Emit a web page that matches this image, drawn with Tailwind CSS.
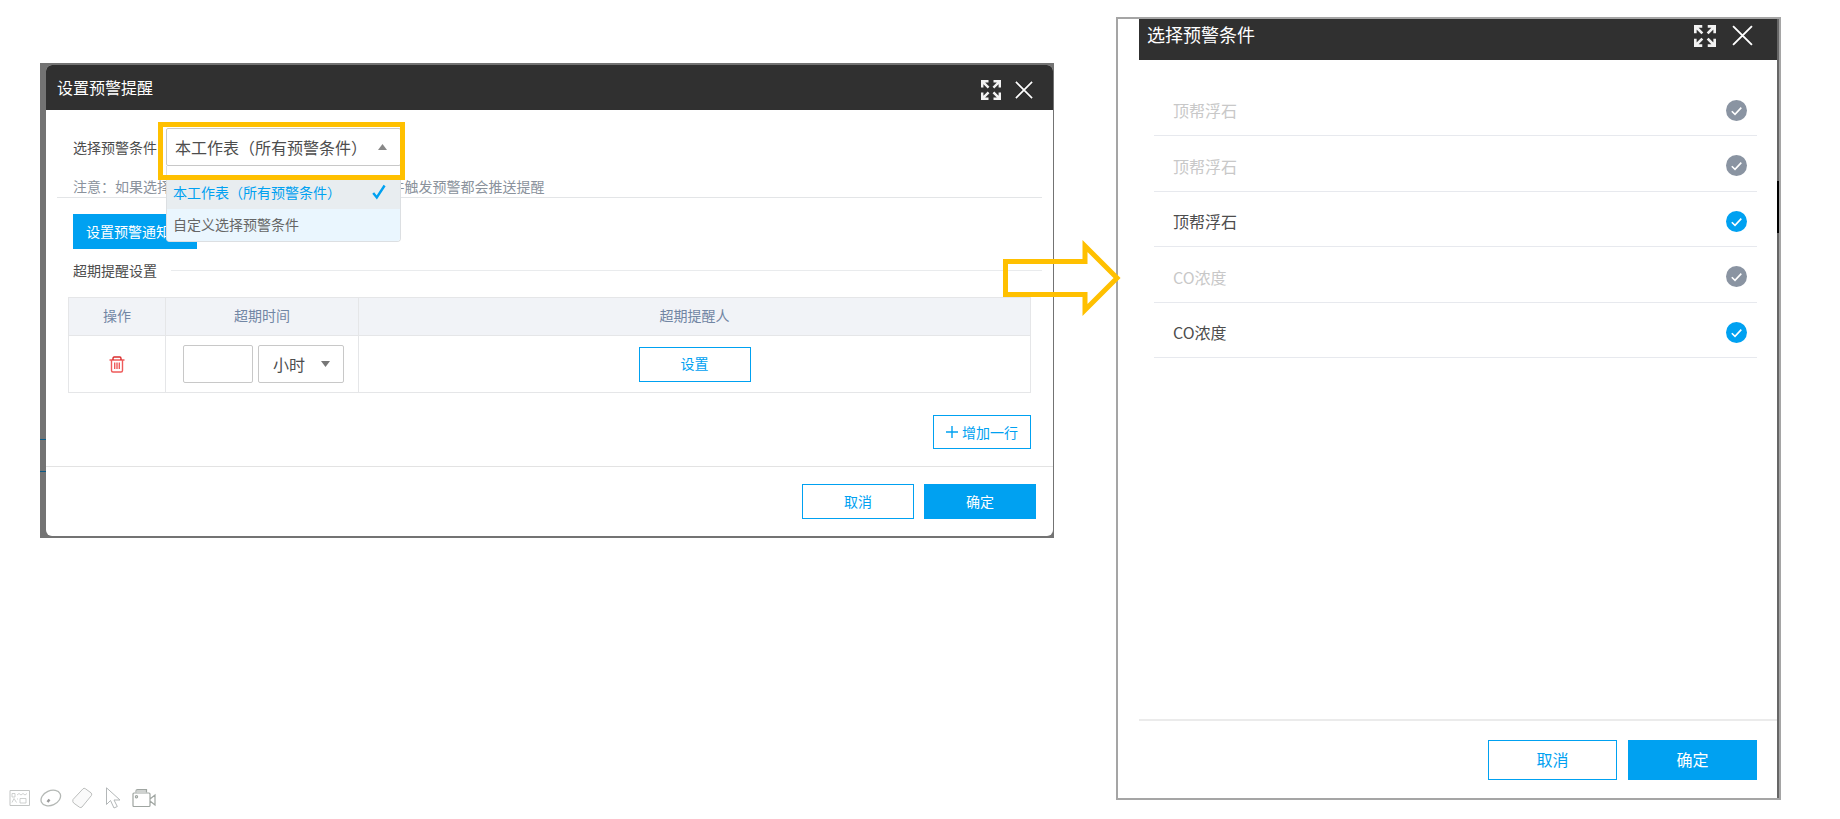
<!DOCTYPE html>
<html lang="zh-CN">
<head>
    <meta charset="UTF-8">
    <meta name="viewport" content="width=device-width, initial-scale=1.0">
    <title>设置预警提醒</title>
    <script src="https://cdn.jsdelivr.net/npm/@tailwindcss/browser@4"></script>
</head>
<body class="bg-white font-['Noto_Sans_CJK_SC',sans-serif] text-sm leading-5 text-[#4d4d4d]">

    <!-- Shared icons -->
    <svg class="hidden">
        <symbol id="expand" viewBox="0 0 20 20">
            <g fill="none" stroke="#f2f2f2" stroke-width="2.4">
                <path d="M1.2 7.5V1.2H7.5M1.8 1.8L7.6 7.6" />
                <path d="M12.5 1.2H18.8V7.5M18.2 1.8L12.4 7.6" />
                <path d="M1.2 12.5V18.8H7.5M1.8 18.2L7.6 12.4" />
                <path d="M12.5 18.8H18.8V12.5M18.2 18.2L12.4 12.4" />
            </g>
        </symbol>
        <symbol id="close" viewBox="0 0 20 20">
            <path d="M1 1L19 19M19 1L1 19" fill="none" stroke="#fff" stroke-width="1.8" />
        </symbol>
        <symbol id="tick" viewBox="0 0 21 21">
            <path d="M5.8 11.2L9 14.3L15.3 7.6" fill="none" stroke="#fff" stroke-width="1.6" />
        </symbol>
    </svg>

    <main class="grid min-h-screen grid-cols-[1054fr_665fr] gap-[62px] pr-[59px]">

        <!-- Left: reminder settings -->
        <div class="relative flex flex-col justify-between pt-[63px] pb-2.5">
            <div class="ml-10 bg-[#737373] pt-[2px] pr-px pb-[2px]">
                <div class="flex">
                    <div class="flex w-[6px] shrink-0 flex-col justify-end pb-16">
                        <span class="h-[33px] border-y border-[#0a5a85]"></span>
                    </div>
                    <section class="min-w-0 flex-1 overflow-hidden rounded-md bg-white">
                        <header class="flex h-[45px] items-center justify-between bg-[#303030] pr-5 pl-[11px]">
                            <h1 class="pb-[2px] text-base text-white">设置预警提醒</h1>
                            <div class="flex items-center gap-3.5 pt-1">
                                <button aria-label="全屏"><svg class="size-5"><use href="#expand" /></svg></button>
                                <button aria-label="关闭"><svg class="size-[18px]"><use href="#close" /></svg></button>
                            </div>
                        </header>

                        <div class="mx-[11px] border-b border-[#e3e5e7] pt-[18px] pl-4">
                            <div class="flex items-center gap-[9px]">
                                <label for="condition">选择预警条件</label>
                                <div class="relative z-10 w-[235px]">
                                    <select id="condition" class="block h-[38px] w-full appearance-none rounded-xs border border-[#c8c8c8] bg-white pl-2 text-base text-[#4d4d4d]">
                                        <option>本工作表（所有预警条件）</option>
                                        <option>自定义选择预警条件</option>
                                    </select>
                                    <svg class="pointer-events-none absolute top-4 right-3.5 h-[6px] w-[9px]" viewBox="0 0 9 6"><path d="M0 6L4.5 0L9 6Z" fill="#888" /></svg>
                                    <ul class="absolute top-full w-full overflow-hidden rounded-b border border-t-0 border-[#dcdfe2] bg-white pt-[11px]">
                                        <li class="flex h-8 items-center justify-between bg-[#e8edf0] pr-3.5 pb-[2px] pl-1.5 text-[#00a1f1]">
                                            本工作表（所有预警条件）
                                            <svg class="h-4 w-3.5" viewBox="0 0 14 16"><path d="M1.2 9L4.8 13.5L12.6 1.5" fill="none" stroke="#00a1f1" stroke-width="2.4" /></svg>
                                        </li>
                                        <li class="flex h-8 items-center bg-[#eaf6fe] pb-[2px] pl-1.5 text-[#666]">自定义选择预警条件</li>
                                    </ul>
                                    <div class="pointer-events-none absolute -top-1.5 -right-1 -bottom-3.5 -left-2 border-5 border-[#ffc000]"></div>
                                </div>
                            </div>
                            <p class="mt-2.5 pb-px text-[#8a929c]">注意：如果选择本工作表(所有预警条件)，则任一条件触发预警都会推送提醒</p>
                        </div>

                        <div class="mx-[11px] pt-4 pl-4">
                            <button class="h-[35px] bg-[#00a1f1] px-[13px] pb-[2px] text-white">设置预警通知人</button>
                            <div class="mt-[11px] flex items-center gap-3.5">
                                <h2>超期提醒设置</h2>
                                <span class="h-px flex-1 bg-[#e9ebed]"></span>
                            </div>
                        </div>

                        <div class="mx-[22px] mt-[17px]">
                            <table class="w-full table-fixed border-collapse">
                                <thead>
                                    <tr class="h-[38px] bg-[#f1f3f7] text-[#7186a4]">
                                        <th class="w-[97px] border border-[#e5e6e8] pb-[3px] font-normal">操作</th>
                                        <th class="w-[193px] border border-[#e5e6e8] pb-[3px] font-normal">超期时间</th>
                                        <th class="border border-[#e5e6e8] pb-[3px] font-normal">超期提醒人</th>
                                    </tr>
                                </thead>
                                <tbody>
                                    <tr class="h-[57px]">
                                        <td class="border border-[#e5e6e8] text-center">
                                            <button aria-label="删除" class="mx-auto block">
                                                <svg class="h-[17px] w-4" viewBox="0 0 16 17" fill="none" stroke="#ee5a5a" stroke-width="1.4">
                                                    <path d="M.5 4H15.5M2.5 4V14.5Q2.5 16 4 16H12Q13.5 16 13.5 14.5V4M5.7 6.5V13M8 6.5V13M10.3 6.5V13" />
                                                    <path d="M4 4V2.5Q4 1 5.2 1H10.8Q12 1 12 2.5V4" stroke="#d92c2c" />
                                                </svg>
                                            </button>
                                        </td>
                                        <td class="border border-[#e5e6e8]">
                                            <div class="flex justify-center gap-[5px] pl-[3px]">
                                                <input type="text" aria-label="超期时间" class="h-[38px] w-[70px] rounded-xs border border-[#c8c8c8] px-2">
                                                <div class="relative">
                                                    <select aria-label="时间单位" class="block h-[38px] w-[86px] appearance-none rounded-xs border border-[#c8c8c8] pl-3.5 text-base text-[#4d4d4d]">
                                                        <option>小时</option>
                                                        <option>天</option>
                                                    </select>
                                                    <svg class="pointer-events-none absolute top-4 right-3.5 h-[6px] w-[9px]" viewBox="0 0 9 6"><path d="M0 0L4.5 6L9 0Z" fill="#777" /></svg>
                                                </div>
                                            </div>
                                        </td>
                                        <td class="border border-[#e5e6e8] text-center">
                                            <button class="h-[35px] w-28 border border-[#00a1f1] pb-[2px] text-[#00a1f1]">设置</button>
                                        </td>
                                    </tr>
                                </tbody>
                            </table>
                            <div class="mt-[22px] flex justify-end">
                                <button class="flex h-[34px] items-center gap-1 border border-[#00a1f1] px-3 text-[#00a1f1]">
                                    <svg class="size-3" viewBox="0 0 12 12"><path d="M0 6H12M6 0V12" stroke="#00a1f1" stroke-width="1.4" /></svg>
                                    增加一行
                                </button>
                            </div>
                        </div>

                        <footer class="mt-[17px] flex justify-end gap-2.5 border-t border-[#e3e3e3] py-[17px] pr-[17px]">
                            <button class="h-[35px] w-28 border border-[#00a1f1] pb-[2px] text-[#00a1f1]">取消</button>
                            <button class="h-[35px] w-28 bg-[#00a1f1] pb-[2px] text-white">确定</button>
                        </footer>
                    </section>
                </div>
            </div>

            <!-- Slideshow tools -->
            <nav class="flex items-center gap-2.5 pl-[9px]">
                <button aria-label="字幕">
                    <svg class="h-5 w-[21px]" viewBox="0 0 21 20" fill="none" stroke="#c3c5c4">
                        <path d="M1 2.5H20.5V17.5H1Z" />
                        <path d="M3 5.5H6V9H3ZM8 7L10 5.5L12 7L14 5.5L16 7L18 5.5M3 14.5L5 10.5L7.5 14.5M8 11H9M11 10.5H17V15H11Z" stroke-width=".8" />
                    </svg>
                </button>
                <button aria-label="画笔">
                    <svg class="h-5 w-[22px]" viewBox="0 0 22 20" fill="none" stroke="#b4b8b5" stroke-width="1.3">
                        <ellipse cx="10.8" cy="10" rx="10.2" ry="7.2" transform="rotate(-24 10.8 10)" />
                        <path d="M7.5 14L9.5 11.5" stroke="#999" stroke-width="2.4" />
                    </svg>
                </button>
                <button aria-label="橡皮擦">
                    <svg class="h-[22px] w-[21px]" viewBox="0 0 21 22" fill="#fafafa" stroke="#bcbebd">
                        <path d="M1 12.5L11 1.8Q12 .8 13.2 1.6L19 5.8Q20.2 7 19.5 8.4L10 20Q9 21 7.6 20.3L1.6 16Q.2 14.5 1 12.5Z" />
                    </svg>
                </button>
                <button aria-label="指针">
                    <svg class="h-[22px] w-[19px]" viewBox="0 0 19 22" fill="none" stroke="#b3b7b8">
                        <path d="M3.5 .8V17.5L7.5 13.5L11 21L14.3 19.5L11 13H17Z" />
                    </svg>
                </button>
                <button aria-label="录像">
                    <svg class="h-5 w-6" viewBox="0 0 24 20" fill="none" stroke="#9fa5a1" stroke-width="1.2">
                        <path d="M2 5H17Q18 5 18 6V17.5Q18 18.5 17 18.5H2Q1 18.5 1 17.5V6Q1 5 2 5ZM18 11L23 7V17L18 13" />
                        <path d="M4 4.5V3Q4 1.5 5.5 1.5H14.5V4.5M5 3H14" />
                        <circle cx="4.5" cy="8.8" r="1.1" />
                    </svg>
                </button>
            </nav>

            <!-- Arrow to the second dialog -->
            <svg class="absolute top-[239px] -right-[67px] z-20 h-[78px] w-[118px]" viewBox="0 0 118 78">
                <path d="M2.5 22.5H82V7L114 39L82 71V55.5H2.5Z" fill="none" stroke="#ffc000" stroke-width="5" />
            </svg>
        </div>

        <!-- Right: condition picker -->
        <div class="mt-[17px] mb-[19px] flex border-2 border-[#a5a5a5] pl-[21px]">
            <section class="flex min-w-0 flex-1 flex-col">
                <header class="flex h-[41px] items-center justify-between bg-[#303030] pr-6 pb-3 pl-2">
                    <h1 class="text-lg leading-6 text-white">选择预警条件</h1>
                    <div class="flex items-center gap-4 pt-1">
                        <button aria-label="全屏"><svg class="size-[22px]"><use href="#expand" /></svg></button>
                        <button aria-label="关闭"><svg class="size-[21px]"><use href="#close" /></svg></button>
                    </div>
                </header>

                <ul class="mr-5 ml-[15px] pt-[21px] text-base">
                    <li class="border-b border-[#e7e9ee]">
                        <label class="flex h-[54px] items-center justify-between pt-1 pr-[10px] pl-[19px] text-[#c8c8c8]">
                            顶帮浮石
                            <span class="grid">
                                <input type="checkbox" checked disabled class="col-start-1 row-start-1 size-[21px] appearance-none rounded-full bg-[#8a94a2]">
                                <svg class="col-start-1 row-start-1 size-[21px]"><use href="#tick" /></svg>
                            </span>
                        </label>
                    </li>
                    <li class="border-b border-[#e7e9ee]">
                        <label class="flex h-[55px] items-center justify-between pt-1 pr-[10px] pl-[19px] text-[#c8c8c8]">
                            顶帮浮石
                            <span class="grid">
                                <input type="checkbox" checked disabled class="col-start-1 row-start-1 size-[21px] appearance-none rounded-full bg-[#8a94a2]">
                                <svg class="col-start-1 row-start-1 size-[21px]"><use href="#tick" /></svg>
                            </span>
                        </label>
                    </li>
                    <li class="border-b border-[#e7e9ee]">
                        <label class="flex h-[54px] items-center justify-between pt-1 pr-[10px] pl-[19px]">
                            顶帮浮石
                            <span class="grid">
                                <input type="checkbox" checked class="col-start-1 row-start-1 size-[21px] appearance-none rounded-full bg-[#00a1f1]">
                                <svg class="pointer-events-none col-start-1 row-start-1 size-[21px]"><use href="#tick" /></svg>
                            </span>
                        </label>
                    </li>
                    <li class="border-b border-[#e7e9ee]">
                        <label class="flex h-[55px] items-center justify-between pt-1 pr-[10px] pl-[19px] text-[#c8c8c8]">
                            CO浓度
                            <span class="grid">
                                <input type="checkbox" checked disabled class="col-start-1 row-start-1 size-[21px] appearance-none rounded-full bg-[#8a94a2]">
                                <svg class="col-start-1 row-start-1 size-[21px]"><use href="#tick" /></svg>
                            </span>
                        </label>
                    </li>
                    <li class="border-b border-[#e7e9ee]">
                        <label class="flex h-[54px] items-center justify-between pt-1 pr-[10px] pl-[19px]">
                            CO浓度
                            <span class="grid">
                                <input type="checkbox" checked class="col-start-1 row-start-1 size-[21px] appearance-none rounded-full bg-[#00a1f1]">
                                <svg class="pointer-events-none col-start-1 row-start-1 size-[21px]"><use href="#tick" /></svg>
                            </span>
                        </label>
                    </li>
                </ul>

                <footer class="mt-auto flex justify-end gap-[11px] border-t-2 border-[#ebebeb] pt-[19px] pr-5 pb-[18px] text-base">
                    <button class="h-10 w-[129px] border border-[#00a1f1] pb-[2px] text-[#00a1f1]">取消</button>
                    <button class="h-10 w-[129px] bg-[#00a1f1] pb-[2px] text-white">确定</button>
                </footer>
            </section>
            <!-- Edge of the page behind the dialog -->
            <div class="w-[2px] bg-[#666] pt-[162px]">
                <div class="h-[52px] bg-black"></div>
            </div>
        </div>
    </main>

</body>
</html>
